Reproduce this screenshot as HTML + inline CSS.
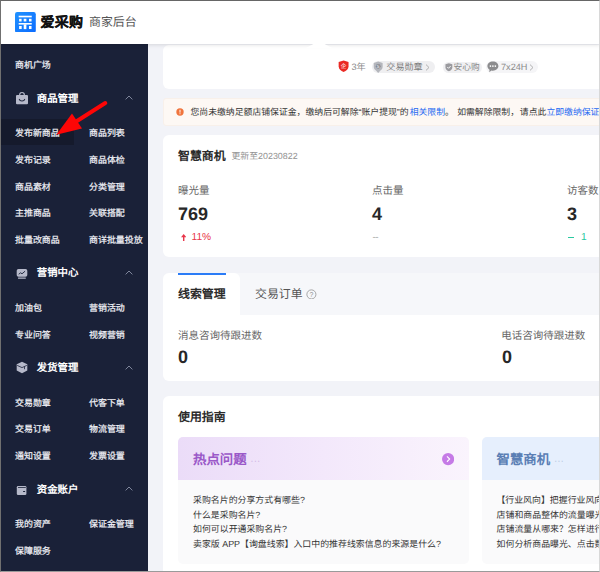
<!DOCTYPE html>
<html lang="zh-CN">
<head>
<meta charset="utf-8">
<title>爱采购 商家后台</title>
<style>
*{box-sizing:border-box;margin:0;padding:0}
html,body{width:600px;height:572px;overflow:hidden;background:#f2f3f8;font-family:"Liberation Sans",sans-serif;color:#333;text-rendering:geometricPrecision}
#app{position:relative;width:600px;height:572px;overflow:hidden;background:#f2f3f8}
.abs{position:absolute;white-space:nowrap}
/* header */
#hdr{position:absolute;left:0;top:0;width:600px;height:44px;background:#fff;box-shadow:0 1px 4px rgba(0,0,0,.12);z-index:3}
#logo{position:absolute;left:15.2px;top:11.5px;width:20.8px;height:20.8px}
#brand{left:40.5px;top:11.5px;font-size:14px;line-height:20px;font-weight:bold;color:#111;letter-spacing:0.3px;-webkit-text-stroke:0.2px #111}
#sub{left:89px;top:13px;font-size:11.9px;line-height:18px;color:#555}
/* sidebar */
#side{position:absolute;left:0;top:44px;width:148.4px;height:528px;background:#1a2138;z-index:2}
#side .it{position:absolute;white-space:nowrap;font-size:8.95px;line-height:14px;color:#f2f3f8;-webkit-text-stroke:0.22px #f2f3f8}
#side .c1{left:15px}
#side .c2{left:89px}
#side .hd{position:absolute;white-space:nowrap;left:36.8px;font-size:10.4px;line-height:16px;font-weight:bold;color:#fff}
#side .ic{position:absolute;left:15px;width:14px;height:14px}
#side .chev{position:absolute;left:125px;width:8px;height:5px}
#hl{position:absolute;left:0;top:75.3px;width:74px;height:26px;background:#151a2c}
/* main */
.card{position:absolute;background:#fff;border-radius:6px}
.t12b{font-size:11.9px;line-height:18px;font-weight:bold;color:#2c2c2c}
.lbl{font-size:10.5px;line-height:16px;color:#666}
.num{font-size:18px;line-height:22px;font-weight:bold;color:#272727}
.q{font-size:8.92px;line-height:15px;color:#333}
#frame{position:absolute;left:0;top:0;width:600px;height:572px;border-top:1px solid #666;border-left:1px solid #707070;border-bottom:1px solid #9a9a9a;border-right:1px solid #d8d8d8;z-index:10;pointer-events:none}
</style>
</head>
<body>
<div id="app">

<!-- main cards -->
<div class="card" style="left:163.3px;top:44.5px;width:460px;height:44.5px"></div>


<!-- badges -->
<svg class="abs" style="left:337.6px;top:60.2px" width="11.2" height="12.4" viewBox="0 0 12 13"><path d="M6 0.3 L11.3 2 V6.5 C11.3 9.6 9 11.6 6 12.7 C3 11.6 0.7 9.6 0.7 6.5 V2 Z" fill="#ea2a24"/><text x="6" y="8.6" font-size="6" fill="#fff" text-anchor="middle" font-family="Liberation Sans, sans-serif">企</text></svg>
<div class="abs" style="left:351.4px;top:60.2px;font-size:9.2px;line-height:14px;color:#8a8a8a">3年</div>
<div class="abs" style="left:371.5px;top:61px;width:63.5px;height:11.6px;border-radius:6px;background:#efeff1"></div>
<svg class="abs" style="left:372.6px;top:60.8px" width="10.4" height="12.4" viewBox="0 0 11 13"><path d="M5.5 0.4 L10.2 2 V6.4 C10.2 8.6 8.4 10.2 5.5 11.2 C2.6 10.2 0.8 8.6 0.8 6.4 V2 Z" fill="#b4b6bc"/><path d="M3.2 10 L5.5 12.6 L7.8 10 Z" fill="#b4b6bc"/><circle cx="5.5" cy="5.6" r="2.5" fill="#84878f"/><text x="5.5" y="7.5" font-size="5" fill="#d8d9dd" text-anchor="middle" font-weight="bold" font-family="Liberation Sans, sans-serif">S</text></svg>
<div class="abs" style="left:386.3px;top:60.3px;font-size:9.1px;line-height:14px;color:#7d7d7d">交易勋章</div>
<svg class="abs" style="left:424.5px;top:63.6px" width="5" height="7" viewBox="0 0 5 7"><path d="M1 0.6 L4 3.5 L1 6.4" stroke="#a8a8a8" stroke-width="0.9" fill="none"/></svg>
<div class="abs" style="left:443px;top:61.6px;width:38.6px;height:11px;border-radius:5.5px;background:#f0f0f2"></div>
<svg class="abs" style="left:445.4px;top:63.2px" width="7.8" height="8.4" viewBox="0 0 9 10"><path d="M4.5 0.2 L8.6 1.6 V5 C8.6 7.4 6.8 9 4.5 9.8 C2.2 9 0.4 7.4 0.4 5 V1.6 Z" fill="#9b9b9f"/><path d="M2.6 4.8 L4.1 6.3 L6.6 3.6" stroke="#fff" stroke-width="1.1" fill="none"/></svg>
<div class="abs" style="left:453.6px;top:60.4px;font-size:8.7px;line-height:14px;color:#8a8a8a">安心购</div>
<div class="abs" style="left:486px;top:61.4px;width:52px;height:11.6px;border-radius:6px;background:#f5f5f7"></div>
<svg class="abs" style="left:487.4px;top:61.4px" width="11.8" height="11.8" viewBox="0 0 12 12"><path d="M6 0.5 C9.2 0.5 11.6 2.6 11.6 5.2 C11.6 7.8 9.2 9.9 6 9.9 C5.5 9.9 5 9.85 4.5 9.7 L2.3 11.5 L2.6 8.9 C1.2 8 0.4 6.7 0.4 5.2 C0.4 2.6 2.8 0.5 6 0.5 Z" fill="#8c8c8e"/><circle cx="3.5" cy="5.2" r="0.85" fill="#fff"/><circle cx="6" cy="5.2" r="0.85" fill="#fff"/><circle cx="8.5" cy="5.2" r="0.85" fill="#fff"/></svg>
<div class="abs" style="left:501px;top:60.2px;font-size:9.15px;line-height:14px;color:#8a8a8a">7x24H</div>
<svg class="abs" style="left:528.6px;top:63.6px" width="5" height="7" viewBox="0 0 5 7"><path d="M1 0.6 L4 3.5 L1 6.4" stroke="#a8a8a8" stroke-width="0.9" fill="none"/></svg>

<!-- alert -->
<div class="abs" style="left:163px;top:98px;width:460px;height:28px;background:#fdf8f4;border:1px solid #f8f0ea;border-radius:3px"></div>
<svg class="abs" style="left:176.2px;top:107.7px" width="8" height="8" viewBox="0 0 10 10"><circle cx="5" cy="5" r="4.6" fill="#f0743c"/><rect x="4.4" y="2.2" width="1.2" height="3.6" fill="#fff"/><rect x="4.4" y="6.6" width="1.2" height="1.2" fill="#fff"/></svg>
<div class="abs" style="left:190.5px;top:105px;font-size:8.85px;line-height:14px;color:#333">您尚未缴纳足额店铺保证金，缴纳后可解除“账户提现”的<span style="color:#2468f2;margin-left:1px">相关限制</span>。<span style="margin-left:3.3px">如需解除限制，</span><span style="margin-left:0.8px">请点此</span><span style="color:#2468f2">立即缴纳保证金</span></div>

<!-- 智慧商机 -->
<div class="card" style="left:163.3px;top:135px;width:460px;height:122px"></div>
<div class="abs t12b" style="left:178px;top:146.8px">智慧商机</div>
<div class="abs" style="left:231.5px;top:149.8px;font-size:8.9px;line-height:13px;color:#929292">更新至20230822</div>
<div class="abs lbl" style="left:178px;top:183px">曝光量</div>
<div class="abs num" style="left:178px;top:202.6px">769</div>
<svg class="abs" style="left:180.6px;top:233.5px" width="5.4" height="7.4" viewBox="0 0 6 8"><path d="M3 0 L6 3.6 H3.8 V8 H2.2 V3.6 H0 Z" fill="#e8364a"/></svg>
<div class="abs" style="left:191.5px;top:231.2px;font-size:10.2px;line-height:14px;color:#e8364a">11%</div>
<div class="abs lbl" style="left:372px;top:183px">点击量</div>
<div class="abs num" style="left:372px;top:202.6px">4</div>
<div class="abs" style="left:372.5px;top:231px;font-size:10px;line-height:14px;color:#aaa;letter-spacing:-0.5px">--</div>
<div class="abs lbl" style="left:567px;top:183px">访客数</div>
<div class="abs num" style="left:567px;top:202.6px">3</div>
<div class="abs" style="left:568px;top:237px;width:6px;height:1.2px;background:#2ac9a0"></div>
<div class="abs" style="left:581px;top:231.2px;font-size:10.2px;line-height:14px;color:#2ac9a0">1</div>

<!-- tabs card -->
<div class="card" style="left:163.3px;top:273px;width:460px;height:108.2px;overflow:hidden">
  <div style="position:absolute;left:0;top:0;width:460px;height:42px;background:#f6f7fa"></div>
  <div style="position:absolute;left:0;top:0;width:77px;height:42px;background:#fff;border-radius:6px 6px 0 0"></div>
  <div style="position:absolute;left:15px;top:0;width:48px;height:2px;background:#2b7cf7"></div>
</div>
<div class="abs t12b" style="left:178px;top:285px">线索管理</div>
<div class="abs" style="left:255px;top:285.2px;font-size:11.9px;line-height:18px;color:#555">交易订单</div>
<svg class="abs" style="left:305.8px;top:288.5px" width="10.8" height="10.8" viewBox="0 0 10 10"><circle cx="5" cy="5" r="4.2" fill="none" stroke="#999" stroke-width="0.8"/><text x="5" y="7.4" font-size="6.5" fill="#999" text-anchor="middle" font-family="Liberation Sans, sans-serif">?</text></svg>
<div class="abs lbl" style="left:178px;top:327.5px">消息咨询待跟进数</div>
<div class="abs num" style="left:178px;top:346.4px">0</div>
<div class="abs lbl" style="left:501.3px;top:327.5px">电话咨询待跟进数</div>
<div class="abs num" style="left:502px;top:346.4px">0</div>

<!-- 使用指南 -->
<div class="card" style="left:163.3px;top:396px;width:460px;height:200px"></div>
<div class="abs t12b" style="left:178px;top:407.8px">使用指南</div>

<div class="abs" style="left:178px;top:437.4px;width:291px;height:126.2px;border-radius:5px;background:#fafafb;overflow:hidden">
  <div style="position:absolute;left:0;top:0;width:292px;height:43px;background:linear-gradient(90deg,#ebdcf8 0%,#f3e8fb 50%,#faf4fd 100%)"></div>
</div>
<div class="abs" style="left:193px;top:449.8px;font-size:13.4px;line-height:20px;font-weight:bold;color:#9a58c8">热点问题 <span style="font-weight:normal;color:#cdb2e2;font-size:10px">···</span></div>
<svg class="abs" style="left:441.8px;top:453.4px" width="12.2" height="12.2" viewBox="0 0 12 12"><circle cx="6" cy="6" r="6" fill="#c57ae6"/><path d="M4.9 3.4 L7.5 6 L4.9 8.6" stroke="#fff" stroke-width="1.1" fill="none"/></svg>
<div class="abs q" style="left:193px;top:492.8px">采购名片的分享方式有哪些?</div>
<div class="abs q" style="left:193px;top:507.5px">什么是采购名片?</div>
<div class="abs q" style="left:193px;top:522.3px">如何可以开通采购名片?</div>
<div class="abs q" style="left:193px;top:537.2px">卖家版 APP【询盘线索】入口中的推荐线索信息的来源是什么?</div>

<div class="abs" style="left:482px;top:437.4px;width:160px;height:126.2px;border-radius:5px;background:#fafafb;overflow:hidden">
  <div style="position:absolute;left:0;top:0;width:160px;height:43px;background:#e6effd"></div>
</div>
<div class="abs" style="left:496.6px;top:449.8px;font-size:13.4px;line-height:20px;font-weight:bold;color:#5b7fb5">智慧商机 <span style="font-weight:normal;color:#b5c6e0;font-size:10px">···</span></div>
<div class="abs q" style="left:496.4px;top:492.8px">【行业风向】把握行业风向，</div>
<div class="abs q" style="left:496.6px;top:507.5px">店铺和商品整体的流量曝光</div>
<div class="abs q" style="left:496.6px;top:522.3px">店铺流量从哪来？怎样进行</div>
<div class="abs q" style="left:496.6px;top:537.2px">如何分析商品曝光、点击数</div>

<!-- sidebar -->
<div id="side">
  <div id="hl"></div>
  <div class="it c1" style="top:14px">商机广场</div>

  <svg class="ic" style="top:47.4px" viewBox="0 0 14 14"><rect x="1" y="4" width="12" height="9.3" rx="1.1" fill="#b6b9ca"/><path d="M4.7 4.3 V3.6 C4.7 2.2 5.7 1.5 7 1.5 C8.3 1.5 9.3 2.2 9.3 3.6 V4.3" stroke="#b6b9ca" stroke-width="1.2" fill="none"/><path d="M4.3 8.4 C5 10.6 9 10.6 9.7 8.4" stroke="#1a2138" stroke-width="1.1" fill="none" stroke-linecap="round"/></svg>
  <div class="hd" style="top:47.5px">商品管理</div>
  <svg class="chev" style="top:51px" viewBox="0 0 8 5"><path d="M0.6 4.4 L4 1 L7.4 4.4" stroke="#7f869c" stroke-width="1" fill="none"/></svg>
  <div class="it c1" style="top:82px">发布新商品</div><div class="it c2" style="top:82px">商品列表</div>
  <div class="it c1" style="top:109px">发布记录</div><div class="it c2" style="top:109px">商品体检</div>
  <div class="it c1" style="top:136px">商品素材</div><div class="it c2" style="top:136px">分类管理</div>
  <div class="it c1" style="top:162px">主推商品</div><div class="it c2" style="top:162px">关联搭配</div>
  <div class="it c1" style="top:189px">批量改商品</div><div class="it c2" style="top:189px">商详批量投放</div>

  <svg class="ic" style="top:223.5px" viewBox="0 0 14 14"><rect x="1.7" y="1" width="10.6" height="7.8" rx="1.8" fill="#b6b9ca"/><rect x="3" y="9.4" width="7.8" height="1.4" rx="0.4" fill="#b6b9ca"/><path d="M4 6 L5.6 4.8 L7 5.8 L9.8 3.4" stroke="#1a2138" stroke-width="0.9" fill="none" stroke-linecap="round" stroke-linejoin="round"/></svg>
  <div class="hd" style="top:221.7px">营销中心</div>
  <svg class="chev" style="top:226px" viewBox="0 0 8 5"><path d="M0.6 4.4 L4 1 L7.4 4.4" stroke="#7f869c" stroke-width="1" fill="none"/></svg>
  <div class="it c1" style="top:257.2px">加油包</div><div class="it c2" style="top:257.2px">营销活动</div>
  <div class="it c1" style="top:283.6px">专业问答</div><div class="it c2" style="top:283.6px">视频营销</div>

  <svg class="ic" style="top:317.4px" viewBox="0 0 14 14"><path d="M7 0.7 L12.3 3.3 V9.6 L7 12.3 L1.7 9.6 V3.3 Z" fill="#b6b9ca"/><path d="M2.2 4.4 L7 6.6 L11.8 4.4" stroke="#1a2138" stroke-width="0.8" fill="none"/><path d="M9.5 5.6 V8.2" stroke="#1a2138" stroke-width="0.8" fill="none"/></svg>
  <div class="hd" style="top:316.9px">发货管理</div>
  <svg class="chev" style="top:321px" viewBox="0 0 8 5"><path d="M0.6 4.4 L4 1 L7.4 4.4" stroke="#7f869c" stroke-width="1" fill="none"/></svg>
  <div class="it c1" style="top:352px">交易勋章</div><div class="it c2" style="top:352px">代客下单</div>
  <div class="it c1" style="top:378px">交易订单</div><div class="it c2" style="top:378px">物流管理</div>
  <div class="it c1" style="top:405px">通知设置</div><div class="it c2" style="top:405px">发票设置</div>

  <svg class="ic" style="top:441px" viewBox="0 0 14 14"><rect x="1.8" y="0.9" width="9.6" height="9.2" rx="1.3" fill="#b6b9ca"/><rect x="3" y="2.2" width="7.8" height="0.8" fill="#1a2138"/><rect x="8" y="6" width="2.2" height="1.1" rx="0.5" fill="#1a2138"/></svg>
  <div class="hd" style="top:438.7px">资金账户</div>
  <svg class="chev" style="top:442.4px" viewBox="0 0 8 5"><path d="M0.6 4.4 L4 1 L7.4 4.4" stroke="#7f869c" stroke-width="1" fill="none"/></svg>
  <div class="it c1" style="top:473px">我的资产</div><div class="it c2" style="top:473px">保证金管理</div>
  <div class="it c1" style="top:500px">保障服务</div>
</div>

<!-- red arrow annotation -->
<svg class="abs" style="left:50px;top:90px;z-index:5" width="70" height="50" viewBox="0 0 70 50"><path d="M55.3 13 L27 31" stroke="#fd0606" stroke-width="4" stroke-linecap="round" fill="none"/><path d="M6.3 44.7 L22 23.5 L32 38.6 Z" fill="#fd0606"/></svg>

<!-- header -->
<div id="hdr">
  <svg id="logo" viewBox="0 0 21 21"><defs><linearGradient id="lg" x1="0" y1="0" x2="1" y2="1"><stop offset="0" stop-color="#2092ff"/><stop offset="1" stop-color="#0b6bff"/></linearGradient></defs><rect width="21" height="21" rx="2.2" fill="url(#lg)"/><g fill="#fff"><rect x="3.7" y="3.75" width="13.2" height="1.65"/><rect x="4.15" y="6.85" width="2.5" height="2.7"/><rect x="8.8" y="6.85" width="2.7" height="2.7"/><rect x="14.1" y="6.85" width="2.6" height="2.7"/><rect x="3.7" y="11.1" width="13.2" height="1.6"/><rect x="8.8" y="12.5" width="2.7" height="4.8"/><rect x="4.15" y="14.1" width="2.6" height="3.1"/><rect x="14.1" y="14.1" width="2.6" height="3.1"/></g></svg>
  <div class="abs" style="left:305.7px;top:41.3px;width:0;height:0;border-left:13px solid transparent;border-right:13px solid transparent;border-bottom:7.3px solid #fff"></div>
  <div id="brand" class="abs">爱采购</div>
  <div id="sub" class="abs">商家后台</div>
</div>

<div id="frame"></div>
</div>
</body>
</html>
